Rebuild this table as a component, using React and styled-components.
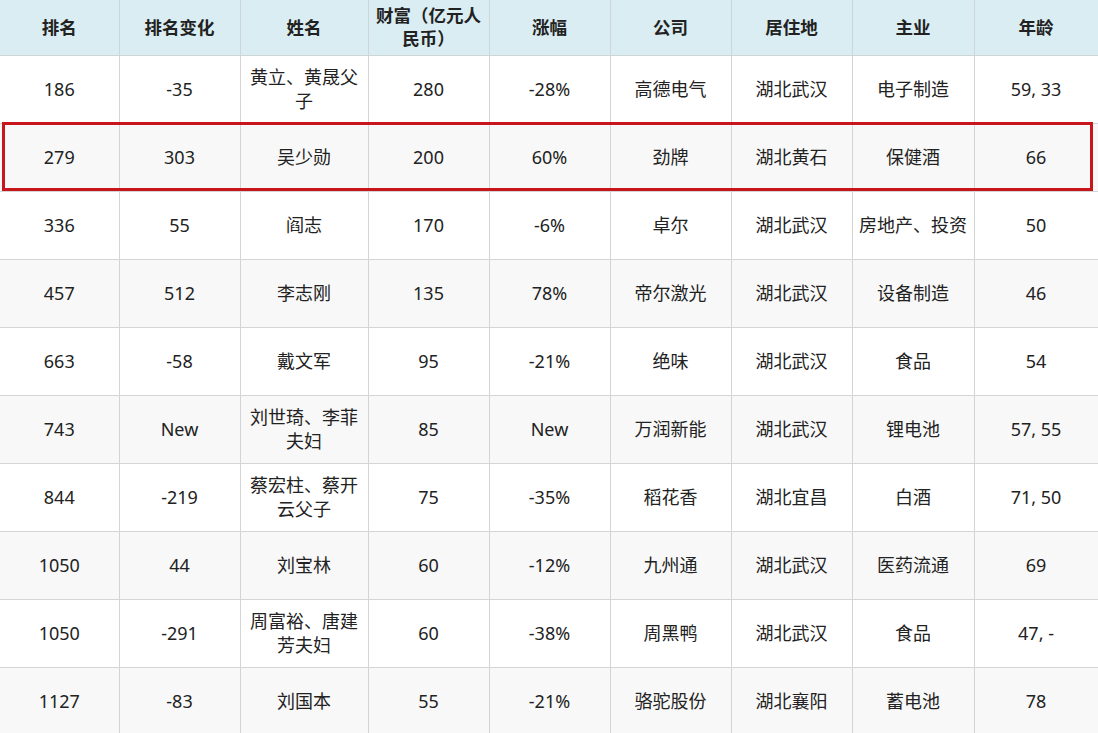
import React from 'react';
import styled, { createGlobalStyle } from 'styled-components';

const GlobalStyle = createGlobalStyle`
  html, body {
    margin: 0;
    padding: 0;
    background: #ffffff;
  }
  body {
    font-family: "Noto Sans", "Noto Sans CJK SC", sans-serif;
    color: #222;
  }
`;

const columns = [
  { title: '排名', width: 119 },
  { title: '排名变化', width: 121 },
  { title: '姓名', width: 128 },
  { title: '财富（亿元人民币）', width: 121 },
  { title: '涨幅', width: 121 },
  { title: '公司', width: 121 },
  { title: '居住地', width: 121 },
  { title: '主业', width: 122 },
  { title: '年龄', width: 124 },
];

const rows = [
  ['186', '-35', '黄立、黄晟父子', '280', '-28%', '高德电气', '湖北武汉', '电子制造', '59, 33'],
  ['279', '303', '吴少勋', '200', '60%', '劲牌', '湖北黄石', '保健酒', '66'],
  ['336', '55', '阎志', '170', '-6%', '卓尔', '湖北武汉', '房地产、投资', '50'],
  ['457', '512', '李志刚', '135', '78%', '帝尔激光', '湖北武汉', '设备制造', '46'],
  ['663', '-58', '戴文军', '95', '-21%', '绝味', '湖北武汉', '食品', '54'],
  ['743', 'New', '刘世琦、李菲夫妇', '85', 'New', '万润新能', '湖北武汉', '锂电池', '57, 55'],
  ['844', '-219', '蔡宏柱、蔡开云父子', '75', '-35%', '稻花香', '湖北宜昌', '白酒', '71, 50'],
  ['1050', '44', '刘宝林', '60', '-12%', '九州通', '湖北武汉', '医药流通', '69'],
  ['1050', '-291', '周富裕、唐建芳夫妇', '60', '-38%', '周黑鸭', '湖北武汉', '食品', '47, -'],
  ['1127', '-83', '刘国本', '55', '-21%', '骆驼股份', '湖北襄阳', '蓄电池', '78'],
];

const Wrap = styled.div`
  position: relative;
  width: 1098px;
  overflow: hidden;
`;

const Table = styled.table`
  width: 1098px;
  table-layout: fixed;
  border-collapse: collapse;
`;

const HeadCell = styled.th`
  height: 54px;
  padding: 0 6px 1px;
  background: #daedf2;
  border: 1px solid #cfd6d8;
  border-top: none;
  font-size: 17.5px;
  font-weight: 700;
  line-height: 23px;
  color: #222;
  text-align: center;
  vertical-align: middle;
  &:first-child { border-left: none; }
`;

const Row = styled.tr`
  background: ${(p) => (p.$striped ? '#f8f8f8' : '#ffffff')};
`;

const Cell = styled.td`
  height: 65px;
  padding: 0 6px 2px;
  border: 1px solid #d4d4d4;
  font-size: 18px;
  line-height: 24px;
  color: #222;
  text-align: center;
  vertical-align: middle;
  &:first-child { border-left: none; }
`;

const Highlight = styled.div`
  position: absolute;
  left: 2px;
  top: 122px;
  width: 1091px;
  height: 69px;
  box-sizing: border-box;
  border: 3px solid #c8161d;
  pointer-events: none;
`;

export default function App() {
  return (
    <>
      <GlobalStyle />
      <Wrap>
        <Table>
          <colgroup>
            {columns.map((c) => (
              <col key={c.title} style={{ width: c.width }} />
            ))}
          </colgroup>
          <thead>
            <tr>
              {columns.map((c) => (
                <HeadCell key={c.title}>{c.title}</HeadCell>
              ))}
            </tr>
          </thead>
          <tbody>
            {rows.map((r, i) => (
              <Row key={i} $striped={i % 2 === 1}>
                {r.map((v, j) => (
                  <Cell key={j}>{v}</Cell>
                ))}
              </Row>
            ))}
          </tbody>
        </Table>
        <Highlight />
      </Wrap>
    </>
  );
}
